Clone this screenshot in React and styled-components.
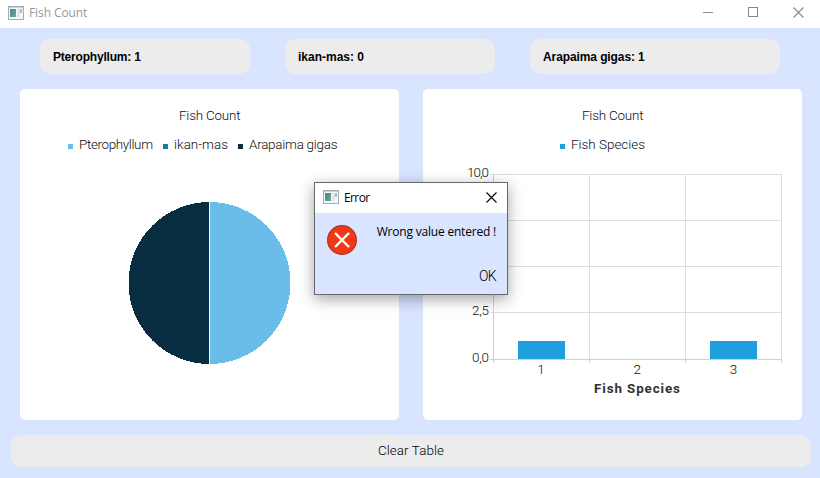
import React from "react";
import styled, { createGlobalStyle } from "styled-components";

const GlobalStyle = createGlobalStyle`
  * { box-sizing: border-box; }
  body { margin: 0; overflow: hidden; }
`;

const Window = styled.div`
  position: relative;
  width: 820px;
  height: 478px;
  display: flex;
  flex-direction: column;
  background: #d9e4ff;
  font-family: Roboto, "Liberation Sans", sans-serif;
  color: #000;
`;

const TitleBar = styled.header`
  height: 28px;
  flex: none;
  display: flex;
  align-items: center;
  padding: 0 16px 3px 8px;
  background: #fff;
`;

const Caption = styled.span`
  flex: 1;
  margin-left: 5px;
  font: 12px/16px "Open Sans", "Noto Sans", sans-serif;
  letter-spacing: ${(p) => p.$track}px;
  color: ${(p) => p.$color};
  white-space: nowrap;
`;

const Controls = styled.div`
  display: flex;
  gap: 34px;
`;

const Counters = styled.div`
  display: flex;
  gap: 35px;
  height: 35px;
  margin: 11px 40px 0;
`;

const Counter = styled.div`
  width: ${(p) => p.$width}px;
  padding: 1px 0 0 13px;
  border-radius: 10px;
  background: #ececec;
  font: bold 12px/35px "Liberation Sans", sans-serif;
  letter-spacing: ${(p) => p.$track}px;
`;

const Charts = styled.main`
  display: flex;
  gap: 24px;
  margin: 15px 18px 0 20px;
`;

const Panel = styled.section`
  width: 379px;
  height: 331px;
  border-radius: 5px;
  background: #fff;
  svg { display: block; }
`;

const ChartText = styled.text`
  font-family: Roboto, "Liberation Sans", sans-serif;
  font-size: 13.4px;
  font-weight: ${(p) => (p.$bold ? 700 : 300)};
  fill: ${(p) => (p.$bold ? "#333" : "#0c0c0c")};
`;

const ClearButton = styled.button`
  width: 800px;
  height: 32px;
  margin: 15px 0 0 11px;
  padding: 0;
  border: 0;
  border-radius: 10px;
  background: #ececec;
  font: 300 13.4px/32px Roboto, "Liberation Sans", sans-serif;
  letter-spacing: 0.1px;
  color: #000;
`;

const Dialog = styled.div`
  position: absolute;
  left: 314px;
  top: 182px;
  width: 194px;
  height: 113px;
  border: 1px solid #66686f;
  background: #d9e4ff;
  box-shadow: 0 4px 14px rgba(0, 0, 0, 0.36);
`;

const DialogTitle = styled.div`
  display: flex;
  align-items: center;
  height: 30px;
  padding: 0 10px 2px 8px;
  background: #fff;
  ${Caption} { padding-top: 2px; }
`;

const DialogBody = styled.div`
  display: flex;
  justify-content: space-between;
  padding: 12px 11px 0 12px;
`;

const Message = styled.p`
  margin: -1px 0 0;
  font: 12px/16px "Open Sans", "Noto Sans", sans-serif;
  letter-spacing: -0.2px;
  white-space: nowrap;
`;

const OkButton = styled.button`
  display: block;
  margin: 13px 11px 0 auto;
  padding: 0;
  border: 0;
  background: none;
  font: 300 14px/16px Roboto, "Liberation Sans", sans-serif;
  letter-spacing: -0.7px;
  color: #000;
`;

function AppIcon() {
  return (
    <svg width="16" height="14" viewBox="0 0 16 14">
      <defs>
        <linearGradient id="screen" x1="0" y1="0" x2="1" y2="1">
          <stop offset="0" stopColor="#4d8299" />
          <stop offset="1" stopColor="#64ad87" />
        </linearGradient>
      </defs>
      <rect x="0.5" y="0.5" width="15" height="13" fill="#f7f8f8" stroke="#a3adb1" />
      <path d="M1 1.5H15" stroke="#c8d0d4" />
      <rect x="2" y="3" width="6" height="8" fill="url(#screen)" />
      <rect x="9" y="3" width="3" height="8" fill="#e3e7ea" />
      <rect x="12" y="3" width="2" height="4" fill="#a9bcc5" />
    </svg>
  );
}

function Cross({ color }) {
  return (
    <svg width="11" height="11" viewBox="0 0 11 11">
      <path d="M0.5 0.5L10.5 10.5M10.5 0.5L0.5 10.5" stroke={color} strokeWidth="1.1" />
    </svg>
  );
}

function Label({ x, y, w, children, ...rest }) {
  return (
    <ChartText x={x} y={y} textLength={w} {...rest}>{children}</ChartText>
  );
}

const pieLegend = [
  { name: "Pterophyllum", color: "#6abde9", x: 48, w: 74 },
  { name: "ikan-mas", color: "#1f77a8", x: 143, w: 54 },
  { name: "Arapaima gigas", color: "#092d40", x: 218, w: 88.5 },
];

function PieChart() {
  return (
    <svg width="379" height="331">
      <Label x="159" y="31" w="61.5">Fish Count</Label>
      {pieLegend.map((s) => (
        <g key={s.name}>
          <rect x={s.x} y="55" width="5" height="5" fill={s.color} />
          <Label x={s.x + 11} y="60" w={s.w}>{s.name}</Label>
        </g>
      ))}
      <g shapeRendering="crispEdges">
        <path d="M189.5 113A81 81 0 0 0 189.5 275Z" fill="#092d40" />
        <path d="M189.5 113A81 81 0 0 1 189.5 275Z" fill="#6abde9" />
        <rect x="189" y="113" width="1" height="162" fill="#fff" />
      </g>
    </svg>
  );
}

const ticks = [
  { y: 85, label: "10,0", x: 44, w: 22 },
  { y: 131 },
  { y: 177 },
  { y: 223, label: "2,5", x: 49, w: 17 },
  { y: 270, label: "0,0", x: 49, w: 17 },
];

function BarChart() {
  return (
    <svg width="379" height="331">
      <Label x="159" y="31" w="61.5">Fish Count</Label>
      <rect x="137" y="55" width="5" height="5" fill="#209fdf" />
      <Label x="148" y="60" w="74">Fish Species</Label>
      <g shapeRendering="crispEdges" fill="#dedede">
        {ticks.map((t) => <rect key={t.y} x="67" y={t.y} width="292" height="1" />)}
        {[70, 166, 262, 358].map((x) => (
          <g key={x}>
            <rect x={x} y="85" width="1" height="185" />
            <rect x={x} y="270" width="1" height="4" fill="#cfcfcf" />
          </g>
        ))}
        <rect x="70" y="85" width="1" height="186" fill="#d0d0d0" />
        <rect x="67" y="270" width="292" height="1" fill="#d0d0d0" />
        {[95, 287].map((x) => (
          <rect key={x} x={x} y="252" width="47" height="18" fill="#209fdf" />
        ))}
      </g>
      {ticks.filter((t) => t.label).map((t) => (
        <Label key={t.label} x={t.x} y={t.y + 3} w={t.w}>{t.label}</Label>
      ))}
      {["1", "2", "3"].map((n, i) => (
        <ChartText key={n} x={118 + i * 96.2} y="285" textAnchor="middle">{n}</ChartText>
      ))}
      <Label x="171" y="304" w="86" $bold>Fish Species</Label>
    </svg>
  );
}

export default function App() {
  return (
    <Window>
      <GlobalStyle />
      <TitleBar>
        <AppIcon />
        <Caption $track={-0.1} $color="#999">Fish Count</Caption>
        <Controls>
          <svg width="11" height="11"><path d="M0 5.5H10" stroke="#888" /></svg>
          <svg width="11" height="11"><rect x="0.5" y="0.5" width="9" height="9" fill="none" stroke="#888" /></svg>
          <Cross color="#888" />
        </Controls>
      </TitleBar>
      <Counters>
        <Counter $width={210} $track={-0.2}>Pterophyllum: 1</Counter>
        <Counter $width={210} $track={0}>ikan-mas: 0</Counter>
        <Counter $width={250} $track={-0.1}>Arapaima gigas: 1</Counter>
      </Counters>
      <Charts>
        <Panel><PieChart /></Panel>
        <Panel><BarChart /></Panel>
      </Charts>
      <ClearButton>Clear Table</ClearButton>
      <Dialog role="dialog">
        <DialogTitle>
          <AppIcon />
          <Caption $track={-0.6} $color="#000">Error</Caption>
          <Cross color="#000" />
        </DialogTitle>
        <DialogBody>
          <svg width="30" height="30" viewBox="0 0 30 30">
            <circle cx="15" cy="15" r="14.4" fill="#f03a17" stroke="#bb3020" strokeWidth="1.2" />
            <path d="M8 8L22 22M22 8L8 22" stroke="#fff" strokeWidth="2.4" />
          </svg>
          <Message>Wrong value entered !</Message>
        </DialogBody>
        <OkButton>OK</OkButton>
      </Dialog>
    </Window>
  );
}
